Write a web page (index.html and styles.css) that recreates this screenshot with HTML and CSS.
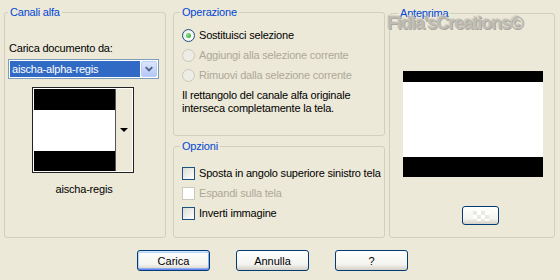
FILE: index.html
```html
<!DOCTYPE html>
<html lang="it">
<head>
  <meta charset="UTF-8" />
  <title>Carica da canale alfa</title>
  <link rel="stylesheet" href="styles.css">
</head>
<body>
  <div class="dialog">
    <div class="groups">
      <fieldset class="group g-channels">
        <legend>Canali alfa</legend>
        <div class="field-label">Carica documento da:</div>
        <div class="combo">
          <span class="combo-value">aischa-alpha-regis</span>
          <span class="combo-btn">
            <svg width="15" height="14" viewBox="0 0 15 14"><path d="M4 5 L7.5 8.5 L11 5" fill="none" stroke="#4d6185" stroke-width="2"/></svg>
          </span>
        </div>
        <div class="thumb">
          <div class="thumb-img">
            <div class="band b-top"></div>
            <div class="band b-mid"></div>
            <div class="band b-bottom"></div>
          </div>
          <div class="thumb-drop"><span class="tri"></span></div>
        </div>
        <div class="thumb-name">aischa-regis</div>
      </fieldset>

      <div class="middle">
        <fieldset class="group g-op">
          <legend>Operazione</legend>
          <div class="options">
            <label class="opt"><span class="radio checked"></span>Sostituisci selezione</label>
            <label class="opt disabled"><span class="radio"></span>Aggiungi alla selezione corrente</label>
            <label class="opt disabled"><span class="radio"></span>Rimuovi dalla selezione corrente</label>
          </div>
          <p class="note">Il rettangolo del canale alfa originale<br>interseca completamente la tela.</p>
        </fieldset>
        <fieldset class="group g-opt">
          <legend>Opzioni</legend>
          <div class="options">
            <label class="opt"><span class="check"></span>Sposta in angolo superiore sinistro tela</label>
            <label class="opt disabled"><span class="check"></span>Espandi sulla tela</label>
            <label class="opt"><span class="check"></span>Inverti immagine</label>
          </div>
        </fieldset>
      </div>

      <fieldset class="group g-preview">
        <legend>Anteprima</legend>
        <div class="preview">
          <div class="band p-top"></div>
          <div class="band p-mid"></div>
          <div class="band p-bottom"></div>
        </div>
        <button type="button" class="btn small"><span class="checker"></span></button>
      </fieldset>
    </div>

    <div class="actions">
      <button type="button" class="btn default">Carica</button>
      <button type="button" class="btn">Annulla</button>
      <button type="button" class="btn">?</button>
    </div>

    <div class="watermark">Fidia'sCreations©</div>
  </div>
</body>
</html>
```

FILE: styles.css
```css
body {
  margin: 0;
  background: #ece9d8;
  font-family: "Liberation Sans", Arial, sans-serif;
  font-size: 11px;
  letter-spacing: -0.2px;
  color: #000;
}
.dialog {
  position: relative;
  width: 560px;
  height: 280px;
}
.groups {
  display: flex;
  align-items: flex-start;
  padding: 6px 0 0 4px;
}
.group {
  box-sizing: border-box;
  margin: 0;
  padding: 0;
  border: 1px solid #d0d0bf;
  border-radius: 3px;
  min-inline-size: 0;
}
.group legend {
  color: #0046d5;
  line-height: 13px;
  padding: 0 2px;
  margin-left: 6px;
}
.g-channels {
  width: 162px;
  height: 232px;
}
.g-channels legend {
  margin-left: 3px;
}
.middle {
  display: flex;
  flex-direction: column;
  gap: 4px;
  margin-left: 7px;
}
.g-op {
  width: 212px;
  height: 130px;
  padding-left: 8px;
}
.g-op legend,
.g-opt legend {
  margin-left: -2px;
}
.g-opt {
  width: 212px;
  height: 98px;
  padding-left: 8px;
}
.g-preview {
  width: 166px;
  height: 231px;
  margin: 1px 0 0 4px;
  padding-left: 13px;
}
.g-preview legend {
  margin-left: -5px;
}

/* canali alfa */
.field-label {
  line-height: 13px;
  margin: 23px 0 0 4px;
}
.combo {
  box-sizing: border-box;
  display: flex;
  width: 151px;
  height: 20px;
  margin: 4px 0 0 3px;
  padding: 1px;
  border: 1px solid #7f9db9;
  background: #fff;
}
.combo-value {
  flex: 1;
  background: #316ac5;
  color: #fff;
  line-height: 16px;
  padding-left: 2px;
}
.combo-btn {
  display: flex;
  align-items: center;
  justify-content: center;
  width: 16px;
  margin-left: 1px;
  border: 1px solid #b9cdf8;
  border-radius: 2px;
  box-sizing: border-box;
  background: linear-gradient(#dbe6fd, #b4c8f6);
}
.thumb {
  box-sizing: border-box;
  display: flex;
  width: 102px;
  height: 86px;
  margin: 8px 0 0 27px;
  padding: 1px;
  border: 1px solid #222;
  background: #fff;
}
.thumb-img {
  width: 81px;
}
.band {
  background: #000;
}
.b-top { height: 21px; }
.b-mid { height: 41px; background: #fff; }
.b-bottom { height: 20px; }
.thumb-drop {
  flex: 1;
  display: flex;
  align-items: center;
  justify-content: center;
  border-left: 1px solid #555;
  background: #ece9d8;
}
.tri {
  width: 0;
  height: 0;
  border-left: 4px solid transparent;
  border-right: 4px solid transparent;
  border-top: 4px solid #000;
}
.thumb-name {
  text-align: center;
  line-height: 13px;
  margin-top: 10px;
  padding-right: 2px;
}

/* operazione / opzioni */
.options {
  display: flex;
  flex-direction: column;
}
.g-op .options {
  margin-top: 6px;
}
.g-opt .options {
  margin-top: 10px;
}
.opt {
  display: flex;
  align-items: center;
  gap: 4px;
  height: 20px;
}
.opt.disabled {
  color: #aca899;
}
.radio {
  box-sizing: border-box;
  display: flex;
  align-items: center;
  justify-content: center;
  width: 13px;
  height: 13px;
  border: 1px solid #1c5180;
  border-radius: 50%;
  background: radial-gradient(circle at 60% 60%, #fff 30%, #dcdcd7);
}
.radio.checked::after {
  content: "";
  width: 5px;
  height: 5px;
  border-radius: 50%;
  background: radial-gradient(circle at 35% 35%, #8ae38a, #21a121);
}
.disabled .radio {
  border-color: #cac8bb;
  background: #eeede5;
}
.check {
  box-sizing: border-box;
  width: 13px;
  height: 13px;
  border: 1px solid #1c5180;
  background: linear-gradient(135deg, #dcdcd7, #fff);
}
.disabled .check {
  border-color: #cac8bb;
  background: #fff;
}
.note {
  margin: 4px 0 0;
  line-height: 13px;
}

/* anteprima */
.preview {
  width: 140px;
  margin-top: 51px;
}
.p-top { height: 11px; }
.p-mid { height: 75px; background: #fff; }
.p-bottom { height: 20px; }

/* pulsanti */
.btn {
  box-sizing: border-box;
  width: 73px;
  height: 21px;
  padding: 0;
  border: 1px solid #003c74;
  border-radius: 3px;
  background: linear-gradient(#fff, #f3f3ef 70%, #d6d0c5);
  font: inherit;
  color: #000;
}
.btn.default {
  box-shadow: inset 0 1px 0 #cee7ff, inset 0 -1px 0 #6982ee, inset 1px 0 0 #b8d4fa, inset -1px 0 0 #8ab3f5, inset 0 2px 0 #bcd4f6, inset 0 -2px 0 #89adec;
}
.btn.small {
  display: flex;
  align-items: center;
  justify-content: center;
  width: 37px;
  height: 19px;
  margin: 29px 0 0 59px;
}
.checker {
  width: 16px;
  height: 10px;
  background: conic-gradient(#fff 25%, #e9e8e1 0 50%, #fff 0 75%, #e9e8e1 0) 0 0 / 8px 8px;
}
.actions {
  display: flex;
  gap: 26px;
  margin-top: 12px;
  padding-left: 137px;
}

.watermark {
  position: absolute;
  left: 387px;
  top: 13px;
  font-size: 18px;
  font-weight: bold;
  letter-spacing: -1px;
  color: #b4b2ab;
  text-shadow: 1px 1px 0 #9b9993, -1px -1px 0 #d6d3c6;
  opacity: 0.8;
}
```
